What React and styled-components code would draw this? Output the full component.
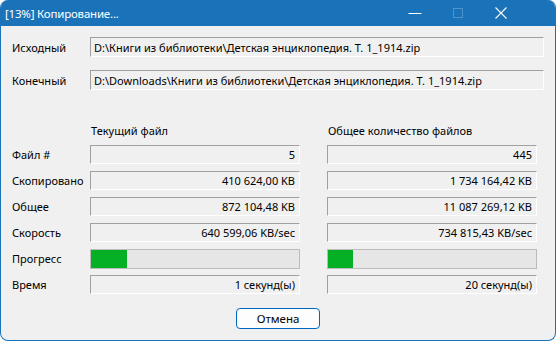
import React from 'react';
import styled, { createGlobalStyle } from 'styled-components';

const GlobalStyle = createGlobalStyle`
  html, body { margin: 0; padding: 0; background: #ffffff; }
  body { font-family: 'Noto Sans', 'Open Sans', sans-serif; }
`;

const stats = [
  { label: 'Файл #', cur: '5', total: '445' },
  { label: 'Скопировано', cur: '410 624,00 KB', total: '1 734 164,42 KB' },
  { label: 'Общее', cur: '872 104,48 KB', total: '11 087 269,12 KB' },
  { label: 'Скорость', cur: '640 599,06 KB/sec', total: '734 815,43 KB/sec' },
  { label: 'Прогресс', cur: 17.5, total: 12, progress: true },
  { label: 'Время', cur: '1 секунд(ы)', total: '20 секунд(ы)' },
];

const App = () => {
  return (
    <>
      <GlobalStyle />
      <Window>
        <TitleBar>
          <Title>[13%] Копирование...</Title>
          <Controls>
            <CtlButton>
              <svg width="14" height="12" viewBox="0 0 14 12">
                <path d="M0.5 6.5h13" stroke="#fff" strokeWidth="1" />
              </svg>
            </CtlButton>
            <CtlButton>
              <svg width="12" height="12" viewBox="0 0 12 12">
                <rect x="1.5" y="1.5" width="9" height="9" fill="none" stroke="#4f93cc" strokeWidth="1" />
              </svg>
            </CtlButton>
            <CtlButton>
              <svg width="14" height="14" viewBox="0 0 14 14">
                <path d="M1.5 1.5l11 11M12.5 1.5l-11 11" stroke="#fff" strokeWidth="1.1" />
              </svg>
            </CtlButton>
          </Controls>
        </TitleBar>

        <Body>
          <PathRow>
            <Label>Исходный</Label>
            <Field>D:\Книги из библиотеки\Детская энциклопедия. Т. 1_1914.zip</Field>
          </PathRow>
          <PathRow>
            <Label>Конечный</Label>
            <Field>D:\Downloads\Книги из библиотеки\Детская энциклопедия. Т. 1_1914.zip</Field>
          </PathRow>

          <StatsGrid>
            <span />
            <Header>Текущий файл</Header>
            <Header $second>Общее количество файлов</Header>
            {stats.map((s) => (
              <React.Fragment key={s.label}>
                <Label>{s.label}</Label>
                {s.progress ? (
                  <>
                    <Progress><Fill style={{ width: `${s.cur}%` }} /></Progress>
                    <Progress $second><Fill style={{ width: `${s.total}%` }} /></Progress>
                  </>
                ) : (
                  <>
                    <Field $right>{s.cur}</Field>
                    <Field $right $second>{s.total}</Field>
                  </>
                )}
              </React.Fragment>
            ))}
          </StatsGrid>

          <Footer>
            <CancelButton>Отмена</CancelButton>
          </Footer>
        </Body>
      </Window>
    </>
  );
};

const Window = styled.div`
  width: 556px;
  height: 341px;
  box-sizing: border-box;
  background: #f0f0f0;
  border: 1px solid #1a73b8;
  border-top: none;
  border-radius: 8px;
  overflow: hidden;
  display: flex;
  flex-direction: column;
  font-size: 11px;
  color: #000;
`;

const TitleBar = styled.div`
  height: 26px;
  flex: none;
  background: #1a73b8;
  color: #fff;
  display: flex;
  align-items: center;
  padding: 0 33px 0 4px;
`;

const Title = styled.div`
  flex: 1;
  font-size: 11.5px;
  letter-spacing: -0.2px;
`;

const Controls = styled.div`
  display: flex;
  height: 100%;
`;

const CtlButton = styled.div`
  width: 43px;
  display: flex;
  align-items: center;
  justify-content: center;
`;

const Body = styled.div`
  flex: 1;
  padding: 11px 10px 0 10px;
  display: flex;
  flex-direction: column;
`;

const PathRow = styled.div`
  display: grid;
  grid-template-columns: 79px 454px;
  align-items: center;
  height: 20px;
  margin-bottom: 13px;
`;

const Label = styled.div`
  padding-left: 1px;
  white-space: nowrap;
`;

const Field = styled.div`
  box-sizing: border-box;
  height: 100%;
  margin-left: ${(p) => (p.$second ? '27px' : '0')};
  border: 1px solid;
  border-color: #a0a0a0 #ffffff #ffffff #a0a0a0;
  background: #f0f0f0;
  padding: 0 4px 0 3px;
  display: flex;
  align-items: center;
  justify-content: ${(p) => (p.$right ? 'flex-end' : 'flex-start')};
  white-space: nowrap;
  overflow: hidden;
`;

const StatsGrid = styled.div`
  display: grid;
  grid-template-columns: 79px 210px 237px;
  grid-template-rows: 16px repeat(6, 19px);
  row-gap: 7px;
  align-items: center;
  margin-top: 19px;
`;

const Header = styled.div`
  padding-left: ${(p) => (p.$second ? '28px' : '1px')};
  align-self: start;
  margin-top: 1px;
`;

const Progress = styled.div`
  box-sizing: border-box;
  height: 20px;
  margin-left: ${(p) => (p.$second ? '27px' : '0')};
  border: 1px solid #bcbcbc;
  background: #e6e6e6;
  overflow: hidden;
`;

const Fill = styled.div`
  height: 100%;
  background: #06b025;
`;

const Footer = styled.div`
  display: flex;
  justify-content: center;
  margin-top: 14px;
`;

const CancelButton = styled.button`
  width: 84px;
  height: 21px;
  box-sizing: border-box;
  background: #fdfdfd;
  border: 1px solid #0067c0;
  border-radius: 4px;
  font-family: inherit;
  font-size: 11.5px;
  color: #000;
  padding: 0;
`;

export default App;
